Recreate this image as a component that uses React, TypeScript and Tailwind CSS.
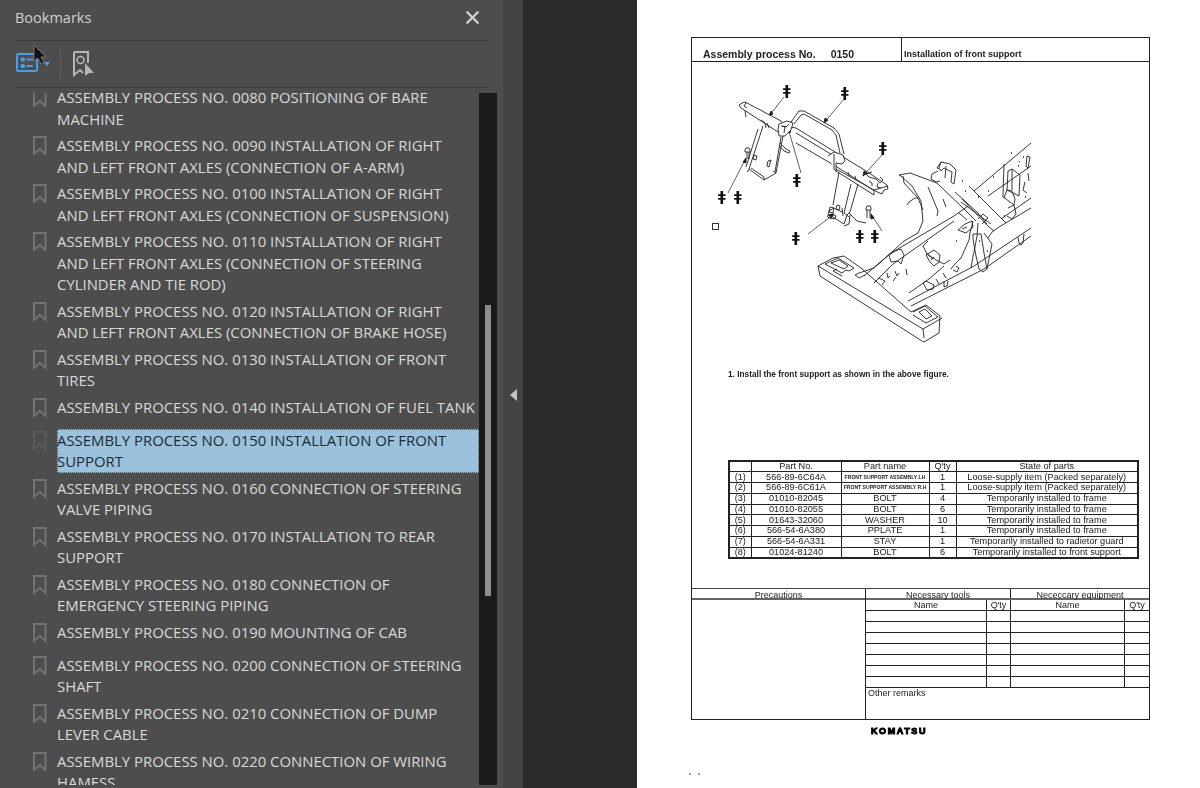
import React from 'react';
import { X } from 'lucide-react';

const bookmarks = [
  'ASSEMBLY PROCESS NO. 0080 POSITIONING OF BARE MACHINE',
  'ASSEMBLY PROCESS NO. 0090 INSTALLATION OF RIGHT AND LEFT FRONT AXLES (CONNECTION OF A-ARM)',
  'ASSEMBLY PROCESS NO. 0100 INSTALLATION OF RIGHT AND LEFT FRONT AXLES (CONNECTION OF SUSPENSION)',
  'ASSEMBLY PROCESS NO. 0110 INSTALLATION OF RIGHT AND LEFT FRONT AXLES (CONNECTION OF STEERING CYLINDER AND TIE ROD)',
  'ASSEMBLY PROCESS NO. 0120 INSTALLATION OF RIGHT AND LEFT FRONT AXLES (CONNECTION OF BRAKE HOSE)',
  'ASSEMBLY PROCESS NO. 0130 INSTALLATION OF FRONT TIRES',
  'ASSEMBLY PROCESS NO. 0140 INSTALLATION OF FUEL TANK',
  'ASSEMBLY PROCESS NO. 0150 INSTALLATION OF FRONT SUPPORT',
  'ASSEMBLY PROCESS NO. 0160 CONNECTION OF STEERING VALVE PIPING',
  'ASSEMBLY PROCESS NO. 0170 INSTALLATION TO REAR SUPPORT',
  'ASSEMBLY PROCESS NO. 0180 CONNECTION OF EMERGENCY STEERING PIPING',
  'ASSEMBLY PROCESS NO. 0190 MOUNTING OF CAB',
  'ASSEMBLY PROCESS NO. 0200 CONNECTION OF STEERING SHAFT',
  'ASSEMBLY PROCESS NO. 0210 CONNECTION OF DUMP LEVER CABLE',
  'ASSEMBLY PROCESS NO. 0220 CONNECTION OF WIRING HAMESS',
];

const parts = [
  ['(1)', '566-89-6C64A', 'FRONT SUPPORT ASSEMBLY LH', '1', 'Loose-supply item (Packed separately)'],
  ['(2)', '566-89-6C61A', 'FRONT SUPPORT ASSEMBLY R.H', '1', 'Loose-supply item (Packed separately)'],
  ['(3)', '01010-82045', 'BOLT', '4', 'Temporarily installed to frame'],
  ['(4)', '01010-82055', 'BOLT', '6', 'Temporarily installed to frame'],
  ['(5)', '01643-32060', 'WASHER', '10', 'Temporarily installed to frame'],
  ['(6)', '566-54-6A380', 'PPLATE', '1', 'Temporarily installed to frame'],
  ['(7)', '566-54-6A331', 'STAY', '1', 'Temporarily installed to radietor guard'],
  ['(8)', '01024-81240', 'BOLT', '6', 'Temporarily installed to front support'],
];

const BookmarkRow = ({ label, selected }: { label: string; selected: boolean }) => (
  <div className="flex pl-[33px] mb-[5px]">
    <svg width="14" height="20" viewBox="0 0 14 20" className={`mt-[1px] shrink-0 ${selected ? 'opacity-40' : ''}`} fill="none">
      <path d="M1 1h11.500v17l-5.750-5-5.750 5z" stroke="#737373" strokeWidth="2" />
    </svg>
    <div
      className={`ml-[10px] w-[422px] pr-[2.5px] min-h-[28px] leading-[21.5px] text-[14.9px] ${
        selected ? 'bg-[#9bc2dc] text-[#1f2a33] -mt-[1px] pt-[1px] outline-1 outline-dotted -outline-offset-1 outline-[#555555]' : 'text-[#d9d9d9]'
      }`}
    >
      {label}
    </div>
  </div>
);

const FrameDrawing = () => (
  <svg width="350" height="285" viewBox="691 62 350 285" fill="none" stroke="#222" strokeWidth="0.9" strokeLinejoin="round">
    {/* leaders */}
    <path d="M783 96l-15 19M843 98l-20 24M882 153l-20 22M800 172l-13-45M745 157l-18 35M807 233l26-20M881 230l-11-17" strokeWidth="0.7" />
    <path d="M768 115l2-5 2 3zM823 122l1-5 3 2zM862 175l1-5 3 2zM787 127l3 4-4 1zM745 157l-3 4 3 1zM833 213l-5 1 2 3zM870 213l0 5 3-1z" fill="#111" />
    {/* arch over the beam */}
    <path d="M790 121l8-11h5l30 17 5 6 5 20M793 123l7-9 3-1 28 16 4 5 4 18" />
    {/* front support beam */}
    <path d="M738 104l5-3 3 1 34 18 2 3-2 5-3 3-37-24z" fill="#fff" />
    <path d="M745 102l-2 3 3 2M744 110l1 6M760 119l4 3 1 5M766 122l2 5" />
    <path d="M782 125l13 2 70 43 21 14 1 4-4 1-2 4-9-4-39-25-2-1-36-21M795 132l38 23" />
    <path d="M827 155l6-4 9 3 2 6-3 3-6-1 0 9" fill="#fff" />
    <path d="M833 153v15l2 2 38 24v-5M835 168l38 21M873 189l14-4M847 171l1 4M854 175l1 4M871 171l-6 2 3 3 7 2 4 4 3-3-3-3" />
    <path d="M868 180l3 2v3M877 182l-1 4 4 1" />
    {/* joint in the middle */}
    <path d="M778 123l8-3 6 2-2 7-6 6-6 0-1-7zM780 125l5 1 3-3M784 126l-1 6" fill="#fff" />
    {/* left leg */}
    <path d="M762 125l-14 43 15 11 12-7 7-37M757 128l-12 38M780 136l-6 35" />
    <path d="M748 168l-2 3M763 179v-3l-13-9M775 172l-3-2M766 165l1-5 3-1-2 7zM752 158l1-4 3 1-1 4z" />
    <path d="M779 142l6 6 4 2-1 2-5-2-5-6" />
    {/* right leg */}
    <path d="M838 171l-6 33M857 183l-8 28-3 3-3 9-16-10 1-3 5-3 8 4M850 183l-7 29 5 4" />
    <path d="M829 206l4 1-1 5-4-1zM836 204l3 1-1 4-3-1zM826 215l2 2 6 1 1-3-4-2zM843 225l5-2 1-9" />
    <path d="M848 212l8 8 9 2M841 207l1 8" />
    {/* bolts */}
    <path d="M744 149l1-2h3l1 2v2h-5zM746 151v7M748 151v7" />
    <path d="M865 207l1-2h3l1 2v2h-5zM866 209v8M869 209v8" />
    {/* front beam */}
    <path d="M817 265l15-8 11-2 17 12 50 44 15-7 13 10 1 1-1 17-15 9-2-1-102-65z" fill="#fff" />
    <path d="M817 265l105 63 1 9M922 328l19-11" />
    <path d="M824 263l13-6 16 10-5 3-3-1-4 3zM830 262l8-3 9 6-4 3zM912 311l12-6 13 11-12 6-13-8M918 311l6-3 7 7-6 3z" />
    <path d="M858 272l-4 2 4 3 6-3M836 268l-4 2 9 5" />
    {/* left rail */}
    <path d="M858 272l15-5 30-27 14-8 5-12-2-20-9-15-11-10-2-1 11-2 27 10 29 28 10 10" />
    <path d="M902 175l1 7 14 15 5 12M917 197l-3 0-6 4-2 3M927 186l10 24-1 5M945 206l-3-8" />
    <path d="M863 275l27-23 63-37 14-10M873 282l19-19 61-43" />
    <path d="M873 282l5-5 6 3-3 4M888 254l6-4 6-2 3 6-3 9-3-3-7 1zM886 272l1 5 2-2M894 270l2 5 2-3" />
    {/* right rail and crossmembers */}
    <path d="M907 300l66-35 57-38M910 305l73-37 47-33" />
    <path d="M922 282l3-2 8 4-1 4-6 1zM943 280l0 6 3-1 1-5M908 292l20-14 15-13M925 254l8-5 6 5-1 7-5 4-4-4zM930 259l3-3" />
    <path d="M927 240l-5 5 4 8 6 5M926 253l9 6 8 4 6-4" />
    {/* arched crossmember near the front */}
    <path d="M972 220l-3 12-1 7-8 18-7 7-3 4M977 222l-1 13-3 16-1 4-2 12M952 269l4 2 2-4-3-2M957 229l7-6 7-3 1 6-7 6zM961 228l5-2" />
    <path d="M972 233l8 0 3 19 3 16-4 3-4-3-3-13-3-17zM983 232l8 11-5 25" />
    {/* upper frame */}
    <path d="M973 190l57-48M987 195l43-30M1003 163l-1 32M1030 197l-30 21M1030 207l-32 19-7 5-4 6M990 223l-30-22" />
    <path d="M958 212l8 7M954 191l23 21 9 11M961 198l26 27 6 5M977 218l5-5 5 4-6 6M968 185l37 37" />
    {/* towers */}
    <path d="M936 167l4-6 9 2 6 6-2 14-3-2 1-10-8-4-3 3-1-2zM940 161l-2 6M945 165l-1 12M937 170l-6 3-1 5 5 3 4-1" />
    <path d="M1007 170l4-2 8 6-1 21-4-2-8-4zM1011 168v21M1003 197l3-8 5 1 3 8-1 6-6 3M1001 195l12 9 2 9-4 5-5-3" />
    <path d="M1026 155l3 1-2 11-2-2zM1018 161l1-1M1024 181l-2 8 4 3M1027 172l1 8" />
    {/* dots */}
    <path d="M1010 152h1M1022 156h1M1017 165h1M992 176h1M987 190h1M1024 196h1M977 196h1M961 180h1M964 190h1M1003 215h1M955 240h1M978 240h1M986 250h1" strokeWidth="1.4" />
    {/* small bracket at the far right */}
    <path d="M1017 236l1 6 2 2 2-2 1-9" />
    {/* short stubs under the rails */}
    <path d="M895 276l-3 4M905 268l1 6M935 278l3 5M942 272l3 5" />
  </svg>
);

const Mark = ({ x, y }: { x: number; y: number }) => (
  <div className="absolute font-bold text-[14px] leading-none text-[#111] font-['DejaVu_Sans',sans-serif]" style={{ left: x, top: y }}>
    ǂ
  </div>
);

const cell = 'border border-[#222] text-center leading-[9px] h-[10.75px] p-0 whitespace-nowrap overflow-hidden';

export default function App() {
  return (
    <div className="flex w-[1200px] h-[788px] overflow-hidden bg-[#2b2b2b] font-['Open_Sans','Noto_Sans',sans-serif]">
      {/* Bookmarks panel */}
      <div className="flex flex-col w-[503px] h-full bg-[#4d4d4d] shrink-0">
        <div className="flex items-center justify-between h-[41px] ml-[15px] mr-[14px] border-b border-[#3a3a3a]">
          <span className="text-[14.5px] text-[#cfcfcf] -mt-[4px]">Bookmarks</span>
          <X size={21} strokeWidth={2.6} className="text-[#d4d4d4] mr-[6px] -mt-[6px]" />
        </div>
        <div className="relative flex items-center h-[47px] ml-[15px] mr-[14px] border-b border-[#3a3a3a]">
          <svg width="36" height="26" viewBox="0 0 36 26" fill="none" className="mt-[4px]">
            <rect x="2" y="1" width="20" height="17" rx="1.500" stroke="#4a9ee8" strokeWidth="2" />
            <rect x="5.500" y="4.500" width="4.500" height="4" rx="1.500" fill="#4a9ee8" />
            <rect x="5.500" y="11" width="4.500" height="4" rx="1.500" fill="#4a9ee8" />
            <path d="M11.500 6.500h6.500M11.500 13h6.500" stroke="#4a9ee8" strokeWidth="2" />
            <path d="M29 9h6l-3 4z" fill="#4a9ee8" />
          </svg>
          <div className="w-px h-[30px] bg-[#5f5f5f] ml-[9px]" />
          <svg width="24" height="26" viewBox="0 0 24 26" fill="none" className="ml-[11px] -mt-[1px]">
            <path d="M2 1h14v11M2 1v23l6-5 3 3" stroke="#b5b5b5" strokeWidth="2" />
            <circle cx="8.500" cy="9" r="3.500" stroke="#b5b5b5" strokeWidth="1.600" />
            <path d="M13 12v13l4-3h5z" fill="#b5b5b5" />
          </svg>
          {/* mouse pointer */}
          <svg width="16" height="24" viewBox="0 0 16 24" className="absolute left-[18px] top-[3px]">
            <path d="M1 1v16l4-3 3 6 3-1-3-6h5z" fill="#111" stroke="#777" strokeWidth="1" />
          </svg>
        </div>
        <div className="flex mt-[5px] h-[692px]">
          <div className="w-[479px] overflow-hidden">
            <div className="-mt-[6px]">
              {bookmarks.map((b) => (
                <BookmarkRow key={b} label={b} selected={b.includes('0150')} />
              ))}
            </div>
          </div>
          <div className="w-[18px] h-full bg-[#1a1a1a] pl-[6px] pt-[212px]">
            <div className="w-[6px] h-[291px] bg-[#8f8f8f]" />
          </div>
        </div>
      </div>
      {/* collapse strip */}
      <div className="flex items-center justify-center w-[20px] h-full bg-[#444444] shrink-0 pt-[1px]">
        <div className="w-0 h-0 border-y-[6px] border-y-transparent border-r-[7px] border-r-[#c4c4c4]" />
      </div>
      <div className="w-[114px] h-full" />
      {/* PDF page */}
      <div className="relative flex-1 h-full bg-white pl-[54px] pt-[37px] font-['Liberation_Sans',sans-serif] text-[#222]">
        <div className="relative flex flex-col w-[459px] h-[683px] border border-[#222] blur-[0.4px]">
          <div className="flex h-[24px] border-b border-[#222] shrink-0 items-end">
            <div className="w-[210px] h-full pl-[11px] flex items-end gap-[15px] text-[10.5px] leading-[13px] font-bold border-r border-[#222]">
              <span>Assembly process No.</span>
              <span>0150</span>
            </div>
            <div className="pl-[2px] text-[9px] font-bold">Installation of front support</div>
          </div>
          <div className="relative h-[398px] shrink-0">
            <div className="absolute left-0 top-[1px]">
              <FrameDrawing />
            </div>
            <Mark x={91} y={21} />
            <Mark x={149} y={23} />
            <Mark x={187} y={78} />
            <Mark x={101} y={110} />
            <Mark x={26} y={127} />
            <Mark x={42} y={127} />
            <Mark x={100} y={168} />
            <Mark x={164} y={166} />
            <Mark x={179} y={166} />
            <div className="absolute left-[20px] top-[161px] w-[7px] h-[7px] border border-[#333]" />
            <div className="absolute left-[36px] top-[306px] text-[8.3px] font-bold">1. Install the front support as shown in the above figure.</div>
          </div>
          <div className="ml-[36px] shrink-0">
            <table className="w-[411px] table-fixed border-collapse border-2 border-[#222] text-[9.2px]">
              <colgroup>
                <col className="w-[22px]" />
                <col className="w-[90px]" />
                <col className="w-[88px]" />
                <col className="w-[27px]" />
                <col />
              </colgroup>
              <thead>
                <tr>
                  <th className={`${cell} font-normal`} />
                  <th className={`${cell} font-normal`}>Part No.</th>
                  <th className={`${cell} font-normal`}>Part name</th>
                  <th className={`${cell} font-normal`}>Q'ty</th>
                  <th className={`${cell} font-normal`}>State of parts</th>
                </tr>
              </thead>
              <tbody>
                {parts.map((p) => (
                  <tr key={p[0]}>
                    <td className={cell}>{p[0]}</td>
                    <td className={cell}>{p[1]}</td>
                    <td className={`${cell} ${p[2].startsWith('FRONT') ? 'text-[5.1px] font-bold' : ''}`}>{p[2]}</td>
                    <td className={cell}>{p[3]}</td>
                    <td className={cell}>{p[4]}</td>
                  </tr>
                ))}
              </tbody>
            </table>
          </div>
          <div className="absolute left-0 right-0 top-[550px] bottom-0 border-t border-[#444] flex text-[9px]">
            <div className="w-[174px] border-r border-[#222]">
              <div className="h-[11px] border-b-2 border-[#666] text-center leading-[12px]">Precautions</div>
            </div>
            <div className="flex-1 flex flex-col">
              <div className="flex h-[11px] border-b-2 border-[#666] leading-[12px] text-center">
                <div className="w-[145px] border-r border-[#222]">Necessary tools</div>
                <div className="flex-1">Nececcary equipment</div>
              </div>
              {['h', 0, 1, 2, 3, 4, 5, 6].map((k) => (
                <div key={k} className="flex h-[11px] border-b border-[#222] text-center leading-[10px]">
                  <div className="w-[121px] border-r border-[#222]">{k === 'h' ? 'Name' : ''}</div>
                  <div className="w-[24px] border-r border-[#222]">{k === 'h' ? "Q'ty" : ''}</div>
                  <div className="w-[114px] border-r border-[#222]">{k === 'h' ? 'Name' : ''}</div>
                  <div className="flex-1">{k === 'h' ? "Q'ty" : ''}</div>
                </div>
              ))}
              <div className="pl-[2px] -mt-[1px]">Other remarks</div>
            </div>
          </div>
        </div>
        <div className="ml-[179px] mt-[6px] w-[58px] text-center text-[9px] leading-[10px] font-bold tracking-[1.6px] text-black [-webkit-text-stroke:1px_black] blur-[0.35px]">KOMATSU</div>
        <div className="flex gap-[7px] -ml-[2px] mt-[37px]">
          <div className="w-[2px] h-[2px] bg-[#8fa3bb]" />
          <div className="w-[2px] h-[2px] bg-[#8fa3bb]" />
        </div>
      </div>
    </div>
  );
}
